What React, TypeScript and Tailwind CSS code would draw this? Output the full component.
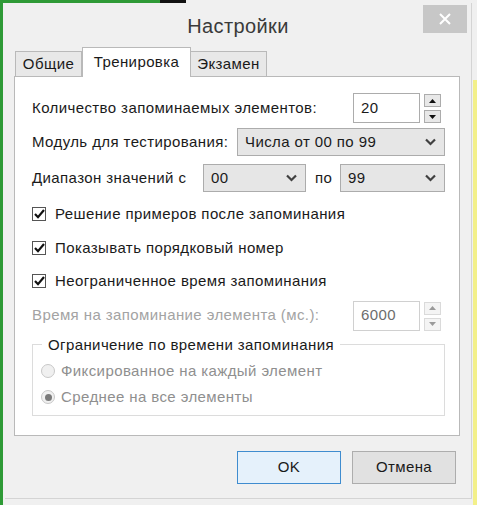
import React from "react";

const Chevron = ({ disabled }: { disabled?: boolean }) => (
  <svg width="11" height="8" viewBox="0 0 11 8" className="shrink-0">
    <path d="M1 1.5 L5.5 6 L10 1.5" fill="none" stroke={disabled ? "#a0a0a0" : "#404040"} strokeWidth="2.2" />
  </svg>
);

const Select = ({ value, className }: { value: string; className: string }) => (
  <div className={`flex items-center justify-between border border-[#acacac] bg-[#e6e6e6] pl-[7px] pr-[8px] text-[15px] text-[#1a1a1a] ${className}`}>
    <span>{value}</span>
    <Chevron />
  </div>
);

const Spin = ({ value, disabled }: { value: string; disabled?: boolean }) => (
  <div className="flex items-start gap-[4px]">
    <div className={`flex h-[30px] w-[67px] items-center border bg-white pl-[7px] text-[15px] ${disabled ? "border-[#d0d0d0] text-[#6d6d6d]" : "border-[#acacac] text-[#1a1a1a]"}`}>
      {value}
    </div>
    <div className="flex flex-col gap-[3px] pt-[1px]">
      {["up", "down"].map((d) => (
        <div key={d} className={`flex h-[13px] w-[17px] items-center justify-center border ${disabled ? "border-[#dadada] bg-[#f4f4f4]" : "border-[#acacac] bg-[#e8e8e8]"}`}>
          <svg width="7" height="4" viewBox="0 0 7 4">
            <path d={d === "up" ? "M0 4 L3.5 0 L7 4 Z" : "M0 0 L3.5 4 L7 0 Z"} fill={disabled ? "#9a9a9a" : "#111"} />
          </svg>
        </div>
      ))}
    </div>
  </div>
);

const Check = ({ label }: { label: string }) => (
  <div className="flex items-center gap-[9px]">
    <div className="flex h-[14px] w-[14px] items-center justify-center border border-[#555] bg-white">
      <svg width="11" height="10" viewBox="0 0 11 10">
        <path d="M1 5 L4 8.2 L10 1" fill="none" stroke="#111" strokeWidth="2.2" />
      </svg>
    </div>
    <span className="text-[15px] text-[#1a1a1a]">{label}</span>
  </div>
);

const Radio = ({ label, checked }: { label: string; checked?: boolean }) => (
  <div className="flex items-center gap-[6px]">
    <div className="flex h-[14px] w-[14px] items-center justify-center rounded-full border border-[#c8c8c8] bg-[#f0f0f0]">
      {checked && <div className="h-[7px] w-[7px] rounded-full bg-[#7a7a7a]" />}
    </div>
    <span className="text-[15px] text-[#8f8f8f]">{label}</span>
  </div>
);

export default function App() {
  return (
    <div
      className="relative h-[505px] w-[477px] overflow-hidden bg-[#f0f0f0] tracking-[0.4px]"
      style={{ fontFamily: '"Liberation Sans", "DejaVu Sans", sans-serif' }}
    >
      {/* screenshot crop edges */}
      <div className="absolute left-0 top-0 h-full w-[3px] bg-[#2e9a36]" />
      <div className="absolute left-0 top-0 h-[3px] w-[160px] bg-[#2e9a36]" />
      <div className="absolute left-[160px] top-0 h-[3px] w-[26px] bg-[#111]" />
      <div className="absolute right-0 top-[80px] h-[425px] w-[4px] bg-[#f3f08a]" />

      <div className="mx-[5px] mt-[3px] flex h-[496px] flex-col border-r border-b border-[#d4d4d4]">
        {/* title bar */}
        <div className="relative flex h-[44px] items-center justify-center">
          <span className="pt-[1px] text-[20px] text-[#3a3a3a]">Настройки</span>
          <div className="absolute right-[4px] top-[2px] flex h-[28px] w-[44px] items-center justify-center bg-[#c7c7c7]">
            <svg width="12" height="12" viewBox="0 0 12 12">
              <path d="M1 1 L11 11 M11 1 L1 11" stroke="#fff" strokeWidth="2" />
            </svg>
          </div>
        </div>

        {/* tabs */}
        <div className="ml-[10px] mr-[11px] flex h-[29px] items-end">
          <div className="mb-[-1px] flex h-[26px] w-[67px] items-center justify-center border border-b-0 border-[#b9b9b9] bg-[#e8e8e8] text-[15px] text-[#1a1a1a]">
            Общие
          </div>
          <div className="relative z-10 mb-[-1px] flex h-[30px] w-[109px] items-start justify-center border border-b-0 border-[#b9b9b9] bg-white pt-[3px] text-[15px] text-[#1a1a1a]">
            Тренировка
          </div>
          <div className="mb-[-1px] flex h-[26px] w-[76px] items-center justify-center border border-b-0 border-l-0 border-[#b9b9b9] bg-[#e8e8e8] text-[15px] text-[#1a1a1a]">
            Экзамен
          </div>
        </div>

        {/* panel */}
        <div className="ml-[9px] mr-[11px] flex h-[360px] flex-col border border-[#b9b9b9] bg-white pl-[17px] pr-[14px] pt-[16px]">
          <div className="flex h-[30px] items-center justify-between pr-[4px]">
            <span className="text-[15px] text-[#1a1a1a]">Количество запоминаемых элементов:</span>
            <Spin value="20" />
          </div>

          <div className="mt-[5px] flex h-[28px] items-center justify-between">
            <span className="text-[15px] text-[#1a1a1a]">Модуль для тестирования:</span>
            <Select value="Числа от 00 по 99" className="h-[28px] w-[208px]" />
          </div>

          <div className="mt-[8px] flex h-[28px] items-center">
            <span className="w-[171px] text-[15px] text-[#1a1a1a]">Диапазон значений с</span>
            <Select value="00" className="h-[28px] w-[103px]" />
            <span className="w-[34px] pl-[9px] text-[15px] text-[#1a1a1a]">по</span>
            <Select value="99" className="h-[28px] w-[105px]" />
          </div>

          <div className="mt-[11px] flex flex-col gap-[11px]">
            <Check label="Решение примеров после запоминания" />
            <Check label="Показывать порядковый номер" />
            <Check label="Неограниченное время запоминания" />
          </div>

          <div className="mt-[8px] flex h-[30px] items-center justify-between pr-[4px]">
            <span className="text-[15px] text-[#a3a3a3]">Время на запоминание элемента (мс.):</span>
            <Spin value="6000" disabled />
          </div>

          <div className="relative mt-[13px] h-[72px] border border-[#dcdcdc] pl-[8px] pt-[15px]">
            <span className="absolute left-[9px] top-[-11px] bg-white px-[6px] text-[15px] text-[#1a1a1a]">
              Ограничение по времени запоминания
            </span>
            <div className="flex flex-col gap-[4px]">
              <Radio label="Фиксированное на каждый элемент" />
              <Radio label="Среднее на все элементы" checked />
            </div>
          </div>
        </div>

        {/* buttons */}
        <div className="flex flex-1 items-start justify-end gap-[11px] pr-[15px] pt-[15px]">
          <div className="flex h-[33px] w-[104px] items-center justify-center border border-[#3f8ccf] bg-[#e5f1fb] text-[15px] text-[#1a1a1a]">
            OK
          </div>
          <div className="flex h-[33px] w-[104px] items-center justify-center border border-[#adadad] bg-[#e1e1e1] text-[15px] text-[#1a1a1a]">
            Отмена
          </div>
        </div>
      </div>
    </div>
  );
}
